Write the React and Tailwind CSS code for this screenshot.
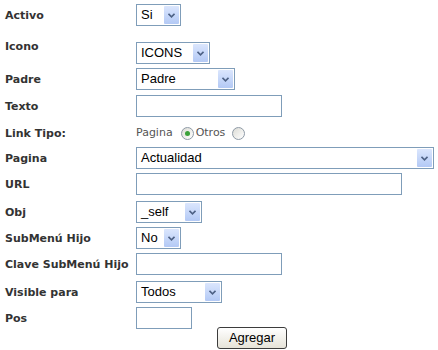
import React from 'react';

const Arrow = () => (
  <span className="flex h-full w-[15px] items-center justify-center rounded-[1px] bg-gradient-to-b from-[#dbe6fd] to-[#b3c9f5]">
    <svg width="7" height="5" viewBox="0 0 7 5">
      <path d="M0.5 0.8 L3.5 3.8 L6.5 0.8" fill="none" stroke="#4d6185" strokeWidth="1.6" />
    </svg>
  </span>
);

const Select = ({ value, width }) => (
  <div
    className="flex h-[22px] items-stretch border border-[#7f9db9] bg-white p-px"
    style={{ width }}
  >
    <span className="flex-1 pl-[3px] font-['Liberation_Sans',Arial,sans-serif] text-[13px] leading-[18px] text-black">
      {value}
    </span>
    <Arrow />
  </div>
);

const Input = ({ width }) => (
  <div className="h-[22px] border border-[#7f9db9] bg-white" style={{ width }} />
);

const Radio = ({ checked }) => (
  <span className="flex h-[13px] w-[13px] items-center justify-center rounded-full border border-[#8e9aa6] bg-gradient-to-br from-[#dcdcd6] to-white">
    {checked && <span className="h-[5px] w-[5px] rounded-full bg-[#3aa13a]" />}
  </span>
);

const Row = ({ label, children, className = 'items-center', labelClass = '' }) => (
  <div className={`flex ${className}`}>
    <div className={`w-[136px] shrink-0 pl-[5px] text-[11px] leading-[13px] font-bold text-[#333] ${labelClass}`}>
      {label}
    </div>
    {children}
  </div>
);

export default function App() {
  return (
    <div className="min-h-[350px] w-[438px] bg-white pt-[4px] font-['DejaVu_Sans',Verdana,sans-serif]">
      <Row label="Activo">
        <Select value="Si" width="45px" />
      </Row>
      <Row label="Icono" className="mt-[16px] items-start" labelClass="-mt-[2px]">
        <Select value="ICONS" width="74px" />
      </Row>
      <Row label="Padre" className="mt-[4px] items-center">
        <Select value="Padre" width="99px" />
      </Row>
      <Row label="Texto" className="mt-[5px] items-center">
        <Input width="146px" />
      </Row>
      <Row label="Link Tipo:" className="mt-[4px] h-[24px] items-center">
        <div className="flex items-center text-[11px] text-[#555]">
          <span>Pagina</span>
          <span className="ml-[8px]"><Radio checked /></span>
          <span className="ml-[2px]">Otros</span>
          <span className="ml-[7px]"><Radio /></span>
        </div>
      </Row>
      <Row label="Pagina" className="mt-[2px] items-center">
        <Select value="Actualidad" width="298px" />
      </Row>
      <Row label="URL" className="mt-[4px] items-center">
        <Input width="266px" />
      </Row>
      <Row label="Obj" className="mt-[6px] items-center">
        <Select value="_self" width="66px" />
      </Row>
      <Row label="SubMenú Hijo" className="mt-[4px] items-center">
        <Select value="No" width="45px" />
      </Row>
      <Row label="Clave SubMenú Hijo" className="mt-[4px] items-center">
        <Input width="146px" />
      </Row>
      <Row label="Visible para" className="mt-[6px] items-center">
        <Select value="Todos" width="86px" />
      </Row>
      <Row label="Pos" className="mt-[4px] items-center">
        <Input width="56px" />
      </Row>
      <div className="-mt-[4px] pl-[217px]">
        <button className="h-[22px] w-[70px] rounded-[3px] border border-[#3c3c3c] bg-gradient-to-b from-white to-[#e6e3d8] font-['Liberation_Sans',Arial,sans-serif] text-[13px] leading-[18px] text-black">
          Agregar
        </button>
      </div>
    </div>
  );
}
